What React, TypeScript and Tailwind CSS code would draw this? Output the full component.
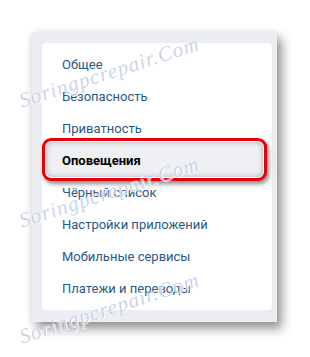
import React from 'react'

const items = [
  'Общее',
  'Безопасность',
  'Приватность',
  'Оповещения',
  'Чёрный список',
  'Настройки приложений',
  'Мобильные сервисы',
  'Платежи и переводы',
]

const ACTIVE = 'Оповещения'

// watermark copies lie over the panel
function Watermark({ top }: { top: number }) {
  return (
    <div
      className="pointer-events-none absolute left-[20px] origin-left -rotate-[18deg] whitespace-nowrap text-[21px] italic tracking-[1px] text-[rgba(150,168,210,0.5)] [text-shadow:0_0_1px_#fff,1px_1px_0_rgba(255,255,255,0.8)]"
      style={{ top, fontFamily: '"Liberation Serif", serif' }}
    >
      Soringpcrepair.Com
    </div>
  )
}

export default function App() {
  return (
    <div className="relative h-[357px] w-[310px] overflow-hidden bg-white" style={{ fontFamily: 'Roboto, "Noto Sans", sans-serif' }}>
      <div className="pl-[32px] pt-[32px]">
        <div className="w-[245px] bg-[#ebedf0] pb-[12px] pl-[10px] pr-[5px] pt-[11px] shadow-[5px_7px_10px_rgba(0,0,0,0.4),0_0_8px_rgba(0,0,0,0.1)]">
          <div className="flex flex-col rounded-[4px] bg-white pb-[5px] pt-[6px]">
            {items.map((label) => {
              const active = label === ACTIVE
              return (
                <div key={label} className="relative flex h-8 items-center px-5 text-[13px]">
                  {active && (
                    <div className="absolute -bottom-[4px] left-0 right-[5px] -top-[7px] rounded-[9px] border-[3px] border-[#e6000c] bg-[#eef0f3] shadow-[inset_0_0_0_1px_#fff,inset_0_0_6px_rgba(0,0,0,0.35),2px_3px_4px_rgba(0,0,0,0.45)]" />
                  )}
                  <span className={active ? 'relative font-bold text-black' : 'relative text-[#2a5885]'}>{label}</span>
                </div>
              )
            })}
          </div>
        </div>
      </div>
      <Watermark top={86} />
      <Watermark top={206} />
      <Watermark top={322} />
    </div>
  )
}
